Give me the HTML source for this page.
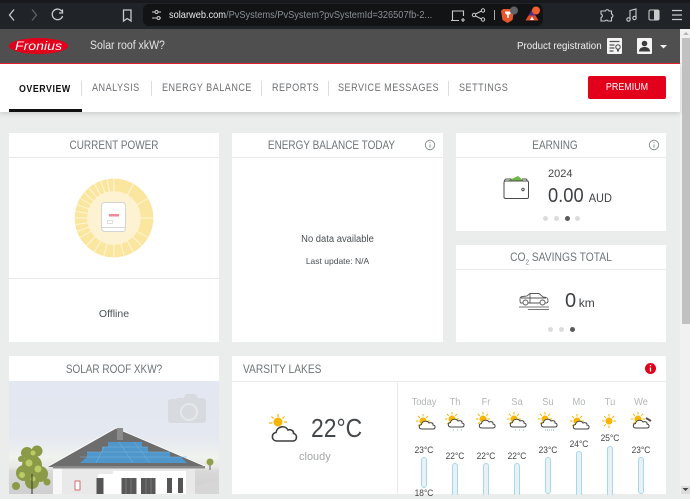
<!DOCTYPE html>
<html><head><meta charset="utf-8"><style>
html,body{margin:0;padding:0;width:690px;height:494px;overflow:hidden;background:#ebedec;font-family:"Liberation Sans",sans-serif}
.a{position:absolute;white-space:nowrap}
.card{position:absolute;background:#fff}
.h{position:absolute;left:0;right:0;text-align:center;font-size:12px;color:#6f7478;white-space:nowrap;transform:scaleX(.83)}
.line{position:absolute;background:#e9e9e9}
.nav{position:absolute;top:82px;font-size:11px;letter-spacing:.6px;color:#6e7073;white-space:nowrap;transform:scaleX(.825);transform-origin:0 0}
.sep{position:absolute;top:81px;width:1px;height:15px;background:#ddd}
.dot{position:absolute;width:5px;height:5px;border-radius:50%;background:#dcdcdc}
.day{position:absolute;top:397px;width:30px;text-align:center;font-size:10px;color:#b3b5b7;transform:scaleX(.93)}
.t{position:absolute;width:30px;text-align:center;font-size:9.5px;color:#444;transform:scaleX(.88)}
.bar{position:absolute;width:4px;background:#e9f1f5;border:1px solid #a4d8ec;border-radius:3px}
</style></head><body>
<div class="a" style="left:0;top:0;width:690px;height:29px;background:#202327"></div>
<div class="a" style="left:0;top:0;width:690px;height:3px;background:#17191c"></div>
<svg class="a" style="left:0;top:0" width="690" height="30" fill="none" stroke="#c8cacc" stroke-width="1.3">
<path d="M14 9.500l-4.500 5.500 4.500 5.500"/><path d="M32 9.500l4.500 5.500-4.500 5.500" stroke="#5f6367"/>
<path d="M62 11.500a5.300 5.300 0 1 0 .6 4.500M62.500 9.500v3.500h-3.500"/>
<path d="M123.500 10h7.500v11l-3.750-2.500-3.750 2.500z"/>
<rect x="143" y="4" width="400" height="22" rx="6" fill="#111315" stroke="none"/>
<path d="M152 12h3M158 12h3M152 18h5M160 18h1" stroke-width="1"/><circle cx="156.500" cy="12" r="1.500" stroke-width="1"/><circle cx="158.500" cy="18" r="1.500" stroke-width="1"/>
<path d="M452.500 20v-9h11v5M451 20.500h8M461 20h4M463 18v4" stroke-width="1.100"/>
<circle cx="474" cy="15" r="1.700" stroke-width="1"/><circle cx="483" cy="10.500" r="1.700" stroke-width="1"/><circle cx="483" cy="19.500" r="1.700" stroke-width="1"/><path d="M475.500 14l6-3M475.500 16l6 3" stroke-width="1"/>
<path d="M494.500 10v10" stroke="#aaa" stroke-width="1"/>
<path d="M503 9h9l2 2-1.500 9-5 3-5-3-1.500-9z" fill="#e8562a" stroke="none"/><path d="M505 11.500h5l.8 2-2 1.500v3h-1.600v-3l-2-1.500z" fill="#fff" stroke="none"/>
<circle cx="514" cy="10.500" r="4" fill="#5f6367" stroke="none"/>
<path d="M525.500 20.500l6.500-11 6.500 11z" fill="#5b2a86" stroke="none"/><path d="M525.500 20.500l3-5 7 0 3 5z" fill="#e04a2a" stroke="none"/><path d="M530 20l2-3.500 2 3.500z" fill="#fff" stroke="none"/>
<circle cx="536" cy="10.500" r="4" fill="#f0612e" stroke="none"/>
<path d="M603 11h2.500a1.800 1.800 0 0 1 3.500 0h2.500v3a1.800 1.800 0 0 1 0 3.500v3.500h-3.500a1.800 1.800 0 0 0-3 0H601v-3.500a1.800 1.800 0 0 0 0-3.500V11z" stroke-width="1.100"/>
<path d="M630 19V10.500l6-1.500v8.500" stroke-width="1.100"/><circle cx="628.500" cy="19.500" r="1.700" stroke-width="1.100"/><circle cx="634.500" cy="18" r="1.700" stroke-width="1.100"/>
<rect x="649" y="10" width="10" height="10" rx="1.500" stroke-width="1.100"/><rect x="654" y="10" width="5" height="10" fill="#c8cacc" stroke="none"/>
<path d="M672 10.500h10M672 15h10M672 19.500h10" stroke-width="1.200"/>
</svg>
<div class="a" style="left:169px;top:9px;font-size:10.500px;color:#e8eaec;transform:scaleX(.88);transform-origin:0 0">solarweb.com<span style="color:#8b9096">/PvSystems/PvSystem?pvSystemId=326507fb-2...</span></div>

<div class="a" style="left:0;top:29px;width:680px;height:34px;background:#4f4f4f"></div>
<div class="a" style="left:0;top:63px;width:680px;height:1px;background:#e2202c"></div>
<svg class="a" style="left:9px;top:38px" width="60" height="17"><ellipse cx="29.500" cy="8" rx="29.500" ry="8" fill="#e2001a"/><text x="6" y="12" font-family="Liberation Sans" font-style="italic" font-size="12" fill="#fff" textLength="47" lengthAdjust="spacingAndGlyphs">Fronius</text></svg>
<div class="a" style="left:90px;top:40px;font-size:11.500px;color:#e4e4e4;transform:scaleX(.915);transform-origin:0 0">Solar roof xkW?</div>
<div class="a" style="left:517px;top:40px;font-size:10.500px;color:#f0f0f0;transform:scaleX(.93);transform-origin:0 0">Product registration</div>
<svg class="a" style="left:607px;top:38px" width="70" height="18">
<rect x="0" y="0" width="15" height="16" rx="1" fill="#f4f4f4"/><path d="M2.500 3.500h10M2.500 7h5M2.500 10h5M2.500 13h4" stroke="#555" stroke-width="1.200"/><circle cx="11" cy="9" r="2.200" fill="none" stroke="#555" stroke-width="1.100"/><path d="M10 11v3l1-1 1 1v-3" fill="#555"/>
<rect x="30" y="0" width="15" height="16" rx="1" fill="#f4f4f4"/><circle cx="37.500" cy="5.500" r="2.800" fill="#3c3c3c"/><path d="M32 13.500c0-3.500 3-4.500 5.500-4.500s5.500 1 5.500 4.500z" fill="#3c3c3c"/>
<path d="M53 7h7l-3.500 3.500z" fill="#f0f0f0"/></svg>

<div class="a" style="left:680px;top:29px;width:10px;height:465px;background:#f1f1f1"></div>
<div class="a" style="left:682px;top:38px;width:8px;height:286px;background:#c1c1c1"></div>
<svg class="a" style="left:680px;top:29px" width="10" height="9"><path d="M3 6h6L6 3z" fill="#b5b5b5"/></svg>
<div class="a" style="left:681px;top:486px;width:9px;height:8px;background:#dcdcdc"></div>
<svg class="a" style="left:681px;top:486px" width="9" height="8"><path d="M1.500 2h6L4.500 5z" fill="#444"/></svg>

<div class="a" style="left:0;top:64px;width:680px;height:48px;background:#fff;box-shadow:0 2px 4px rgba(0,0,0,.12)"></div>
<div class="nav" style="left:19px;color:#111;font-weight:700;font-size:10.5px;letter-spacing:.65px;top:83px;transform:scaleX(.84)">OVERVIEW</div>
<div class="a" style="left:9px;top:109px;width:73px;height:3px;background:#111"></div>
<div class="sep" style="left:81px"></div>
<div class="nav" style="left:92px">ANALYSIS</div>
<div class="sep" style="left:151px"></div>
<div class="nav" style="left:162px">ENERGY BALANCE</div>
<div class="sep" style="left:261px"></div>
<div class="nav" style="left:272px">REPORTS</div>
<div class="sep" style="left:328px"></div>
<div class="nav" style="left:338px">SERVICE MESSAGES</div>
<div class="sep" style="left:448px"></div>
<div class="nav" style="left:459px">SETTINGS</div>
<div class="a" style="left:588px;top:76px;width:78px;height:23px;background:#e2001a;border-radius:2px"></div>
<div class="a" style="left:588px;top:76px;width:78px;height:23px;color:#fff;font-size:10.500px;line-height:23px;text-align:center;transform:scaleX(.85)">PREMIUM</div>

<!-- Current power -->
<div class="card" style="left:9px;top:133px;width:210px;height:209px"></div>
<div class="h" style="left:9px;width:210px;right:auto;top:138px">CURRENT POWER</div>
<div class="line" style="left:9px;top:157px;width:210px;height:1px"></div>
<div class="line" style="left:9px;top:278px;width:210px;height:1px"></div>
<svg class="a" style="left:70px;top:174px" width="90" height="90">
<circle cx="44" cy="44" r="39.500" fill="#fdf3d2"/>
<circle cx="44" cy="44" r="33" fill="none" stroke="#fbe6a0" stroke-width="12.500"/>
<g stroke="#fff6d8" stroke-width="1">
<line x1="44" y1="5" x2="44" y2="18"/>
<line x1="44" y1="5" x2="44" y2="18" transform="rotate(30 44 44)"/>
<line x1="44" y1="5" x2="44" y2="18" transform="rotate(60 44 44)"/>
<line x1="44" y1="5" x2="44" y2="18" transform="rotate(90 44 44)"/>
<line x1="44" y1="5" x2="44" y2="18" transform="rotate(120 44 44)"/>
<line x1="44" y1="5" x2="44" y2="18" transform="rotate(135 44 44)"/>
<line x1="44" y1="5" x2="44" y2="18" transform="rotate(150 44 44)"/>
<line x1="44" y1="5" x2="44" y2="18" transform="rotate(165 44 44)"/>
<line x1="44" y1="5" x2="44" y2="18" transform="rotate(180 44 44)"/>
<line x1="44" y1="5" x2="44" y2="18" transform="rotate(195 44 44)"/>
<line x1="44" y1="5" x2="44" y2="18" transform="rotate(210 44 44)"/>
<line x1="44" y1="5" x2="44" y2="18" transform="rotate(225 44 44)"/>
<line x1="44" y1="5" x2="44" y2="18" transform="rotate(240 44 44)"/>
<line x1="44" y1="5" x2="44" y2="18" transform="rotate(250 44 44)"/>
<line x1="44" y1="5" x2="44" y2="18" transform="rotate(260 44 44)"/>
<line x1="44" y1="5" x2="44" y2="18" transform="rotate(270 44 44)"/>
<line x1="44" y1="5" x2="44" y2="18" transform="rotate(280 44 44)"/>
<line x1="44" y1="5" x2="44" y2="18" transform="rotate(290 44 44)"/>
<line x1="44" y1="5" x2="44" y2="18" transform="rotate(300 44 44)"/>
<line x1="44" y1="5" x2="44" y2="18" transform="rotate(310 44 44)"/>
<line x1="44" y1="5" x2="44" y2="18" transform="rotate(320 44 44)"/>
<line x1="44" y1="5" x2="44" y2="18" transform="rotate(330 44 44)"/>
<line x1="44" y1="5" x2="44" y2="18" transform="rotate(340 44 44)"/>
<line x1="44" y1="5" x2="44" y2="18" transform="rotate(350 44 44)"/>
</g>
<rect x="31.500" y="28.500" width="24" height="29" rx="3" fill="#fff" stroke="#d4d4d4"/>
<path d="M32 53.500h23" stroke="#d8d8d8"/>
<rect x="39" y="40" width="10" height="2.500" fill="#f28a98"/>
<rect x="37.500" y="46.500" width="5" height="3" fill="#fff" stroke="#d8d8d8" stroke-width=".8"/>
</svg>
<div class="a" style="left:9px;width:210px;top:308px;text-align:center;font-size:10.500px;color:#4b5157">Offline</div>

<!-- Energy balance -->
<div class="card" style="left:232px;top:133px;width:211px;height:209px"></div>
<div class="h" style="left:226px;width:211px;right:auto;top:138px">ENERGY BALANCE TODAY</div>
<div class="line" style="left:232px;top:157px;width:211px;height:1px"></div>
<svg class="a" style="left:424px;top:139px" width="12" height="12"><circle cx="6" cy="6" r="4.700" fill="none" stroke="#8a8f92"/><path d="M6 5.500v3.200M6 3.300v1" stroke="#8a8f92"/></svg>
<div class="a" style="left:232px;width:211px;top:234px;text-align:center;font-size:10px;color:#4b4f52;transform:scaleX(.94)">No data available</div>
<div class="a" style="left:232px;width:211px;top:256px;text-align:center;font-size:8.500px;color:#4b4f52">Last update: N/A</div>

<!-- Earning -->
<div class="card" style="left:456px;top:133px;width:210px;height:98px"></div>
<div class="h" style="left:450px;width:210px;right:auto;top:138px">EARNING</div>
<div class="line" style="left:456px;top:157px;width:210px;height:1px"></div>
<svg class="a" style="left:648px;top:139px" width="12" height="12"><circle cx="6" cy="6" r="4.700" fill="none" stroke="#8a8f92"/><path d="M6 5.500v3.200M6 3.300v1" stroke="#8a8f92"/></svg>
<svg class="a" style="left:502px;top:174px" width="28" height="26" fill="none" stroke="#4a4a4a">
<path d="M3 8l13-6 6 5" fill="#6fb744" stroke="none"/>
<path d="M2.500 7.500c0-2 .5-2.500 2-2.500h5M20 5h4c1 0 1 1 1 2.500"/>
<rect x="2" y="7" width="24.500" height="17.500" rx="1.500" fill="#fff"/>
<circle cx="21" cy="15.500" r="1.200"/></svg>
<div class="a" style="left:548px;top:168px;font-size:11px;color:#444">2024</div>
<div class="a" style="left:548px;top:185px;font-size:20px;color:#3e4144;transform:scaleX(.915);transform-origin:0 0">0.00 <span style="font-size:12px">AUD</span></div>
<div class="dot" style="left:543px;top:216px"></div><div class="dot" style="left:554px;top:216px"></div><div class="dot" style="left:565px;top:216px;background:#5a5a5a"></div><div class="dot" style="left:575px;top:216px"></div>

<!-- CO2 -->
<div class="card" style="left:456px;top:245px;width:210px;height:97px"></div>
<div class="h" style="left:456px;width:210px;right:auto;top:250px;transform:scaleX(.86)">CO<sub style="font-size:7px;line-height:0">2</sub> SAVINGS TOTAL</div>
<div class="line" style="left:456px;top:269px;width:210px;height:1px"></div>
<svg class="a" style="left:518px;top:289px" width="32" height="22" fill="none" stroke="#555" stroke-width=".9">
<path d="M2 10c0-1.500 1-2.500 3-2.500l4-.5 3-2.500h9l4 3.500 3 .5c2 .5 2 2 2 3.500 0 1.500-1 2-2 2H3c-1 0-1-2-1-4z"/>
<path d="M12 5v9M3 9h25"/><circle cx="7.500" cy="13.500" r="2.500" fill="#fff"/><circle cx="24.500" cy="13.500" r="2.500" fill="#fff"/>
<path d="M1 18h30M10 20.500h21" stroke="#777"/></svg>
<div class="a" style="left:565px;top:290px;font-size:20px;color:#3e4144">0 <span style="font-size:12px;margin-left:-3px">km</span></div>
<div class="dot" style="left:548px;top:327px"></div><div class="dot" style="left:559px;top:327px"></div><div class="dot" style="left:570px;top:327px;background:#5a5a5a"></div>

<!-- Solar roof -->
<div class="card" style="left:9px;top:356px;width:210px;height:138px"></div>
<div class="h" style="left:9px;width:210px;right:auto;top:362px">SOLAR ROOF XKW?</div>
<svg class="a" style="left:9px;top:381px" width="210" height="113">
<defs><linearGradient id="s" x1="0" y1="0" x2="0" y2="1"><stop offset="0" stop-color="#e2e7f1"/><stop offset=".48" stop-color="#e4e8f0"/><stop offset=".68" stop-color="#f0f2ee"/><stop offset=".76" stop-color="#e8e8e6"/><stop offset=".8" stop-color="#d8d8d8"/><stop offset="1" stop-color="#cfcfcf"/></linearGradient></defs>
<rect width="210" height="113" fill="url(#s)"/>
<path d="M159 21a3 3 0 0 1 3-3h5l2-1h6l2-4h10l2 4h4a4 4 0 0 1 4 4v18a3 3 0 0 1-3 3h-32a3 3 0 0 1-3-3z" fill="#d7dade"/><circle cx="180" cy="31" r="8" fill="none" stroke="#e6e8ec" stroke-width="2"/>
<path d="M108 47h6v12h-6z" fill="#8b8b8b"/>
<path d="M38 86L107 47l91 39z" fill="#6d6d6d"/>
<path d="M38 86L107 47l91 39" fill="none" stroke="#fff" stroke-width=".8"/>
<path d="M108 47h6v12h-6z" fill="#8b8b8b"/>
<path d="M99 61h34v5h6v5h22v5h11l6 6H71l7-6v-5h15v-5h6z" fill="#4f96cb"/>
<path d="M71 76h107M78 71h83M93 66h46M110 61l14 21M125 61l16 21M95 66l-8 16" stroke="#7ab5dc" stroke-width=".5" fill="none"/>
<rect x="44" y="85" width="152" height="2.500" fill="#8a8a8a"/>
<rect x="44" y="87.500" width="142" height="25.500" fill="#e9e9e9"/>
<rect x="44" y="87.500" width="9" height="25.500" fill="#f7f7f7"/>
<rect x="89" y="93" width="15" height="20" fill="#fff"/><rect x="104" y="90" width="73" height="23" fill="#fff"/>
<rect x="87.500" y="97" width="7" height="16" fill="#555"/>
<rect x="112.500" y="97" width="15" height="16" fill="#585858"/><rect x="132" y="97" width="14.500" height="16" fill="#585858"/><path d="M117 97v16M122 97v16M137 97v16M142 97v16" stroke="#999" stroke-width=".5"/>
<rect x="158" y="97" width="5" height="15" fill="#555"/><rect x="169" y="97" width="5" height="15" fill="#555"/>
<rect x="66" y="100" width="5" height="9" fill="#fff" stroke="#c33" stroke-width=".7"/>
<path d="M186 105l24-6v14h-24z" fill="#d6d6d6"/>
<g fill="#8a9a46"><circle cx="23" cy="84" r="10"/><circle cx="18" cy="72" r="6"/><circle cx="28" cy="70" r="5.500"/><circle cx="15" cy="92" r="8"/><circle cx="31" cy="93" r="8"/><circle cx="23" cy="101" r="7"/><circle cx="7" cy="105" r="4"/><circle cx="38" cy="101" r="3.500"/><circle cx="12" cy="78" r="3"/></g>
<g fill="#bccb68"><circle cx="20" cy="82" r="3.500"/><circle cx="29" cy="88" r="3.500"/><circle cx="24" cy="72" r="2.500"/><circle cx="13" cy="94" r="3"/><circle cx="24" cy="98" r="2.500"/></g>
<path d="M23 93v20" stroke="#4a4a3a" stroke-width="1.200"/>
<circle cx="201" cy="81" r="3.500" fill="#8f9f4c"/><path d="M201 84v5" stroke="#666"/>
</svg>

<!-- Weather -->
<div class="card" style="left:232px;top:356px;width:434px;height:138px"></div>
<div class="a" style="left:243px;top:362px;font-size:12px;color:#6f7478;transform:scaleX(.85);transform-origin:0 0">VARSITY LAKES</div>
<div class="line" style="left:232px;top:381px;width:434px;height:1px"></div>
<div class="line" style="left:397px;top:381px;width:1px;height:113px"></div>
<svg class="a" style="left:644px;top:362px" width="13" height="13"><circle cx="6.500" cy="6.500" r="5.500" fill="#e2001a"/><path d="M6.500 5.500v4M6.500 3v1.300" stroke="#fff" stroke-width="1.300"/></svg>
<svg class="a" style="left:267px;top:411px" width="32" height="32" fill="none">
<circle cx="11" cy="11" r="4.500" fill="#f8b500"/>
<path d="M11 3v3M4.500 5.500l2 2M2 12h3.500M17.500 5.500l-2 2M20 11h-3" stroke="#f8b500" stroke-width="1.200"/>
<path d="M10 30c-6 0-6-8-1-8.500 1-6 9-8 12-2.500 3-1 6 1 5.500 3.500 4 .5 4 7.500-.5 7.500z" fill="#fff" stroke="#3d3d3d" stroke-width="1.600"/></svg>
<div class="a" style="left:311px;top:413px;font-size:26px;color:#45484b;transform:scaleX(.88);transform-origin:0 0">22°C</div>
<div class="a" style="left:299px;top:451px;font-size:11px;color:#a4a6a8">cloudy</div>

<div class="day" style="left:409px">Today</div><div class="day" style="left:440px">Th</div><div class="day" style="left:471px">Fr</div><div class="day" style="left:502px">Sa</div><div class="day" style="left:533px">Su</div><div class="day" style="left:564px">Mo</div><div class="day" style="left:595px">Tu</div><div class="day" style="left:626px">We</div>

<svg class="a" style="left:410px;top:412px" width="260" height="24" fill="none">
<defs>
<g id="sun"><circle cx="0" cy="0" r="3.500" fill="#f8b500"/><path d="M0-7v2.500M-5-5l1.800 1.800M-7 0h2.500M5-5l-1.800 1.800M7 0h-2.500M0 7v-2.500M-5 5l1.800-1.800" stroke="#f8b500"/></g>
<path id="cl" d="M-6 5c-3.500 0-3.500-4-.5-4.500C-6-3-1-4 1-1c2-1 4.500 0 4 2 3 .5 2.500 4 0 4z" fill="#fff" stroke="#444"/>
</defs>
<use href="#sun" x="13" y="9"/><use href="#cl" x="18" y="12"/>
<use href="#sun" x="42" y="7"/><use href="#cl" x="47" y="10"/><path d="M43 18h1M47 18h1M51 18h1" stroke="#7fb8dc"/>
<use href="#sun" x="73" y="7"/><use href="#cl" x="78" y="11"/>
<use href="#sun" x="104" y="7"/><use href="#cl" x="109" y="10"/><path d="M105 18h1M109 18h1M113 18h1" stroke="#7fb8dc"/>
<use href="#sun" x="135" y="7"/><use href="#cl" x="140" y="10"/><path d="M135 18h9" stroke="#7fb8dc" stroke-dasharray="1 1"/>
<use href="#sun" x="167" y="9"/><use href="#cl" x="172" y="12"/>
<use href="#sun" x="199" y="9"/>
<use href="#sun" x="228" y="7"/><use href="#cl" x="232" y="11"/><path d="M236 6l5 3" stroke="#555" stroke-width="2"/>
</svg>

<div class="t" style="left:409px;top:445px">23°C</div><div class="t" style="left:409px;top:488px">18°C</div>
<div class="t" style="left:440px;top:451px">22°C</div><div class="t" style="left:471px;top:451px">22°C</div><div class="t" style="left:502px;top:451px">22°C</div><div class="t" style="left:533px;top:445px">23°C</div><div class="t" style="left:564px;top:439px">24°C</div><div class="t" style="left:595px;top:433px">25°C</div><div class="t" style="left:626px;top:445px">23°C</div>
<div class="bar" style="left:421px;top:457px;height:29px"></div>
<div class="bar" style="left:452px;top:463px;height:31px;border-bottom:0;border-radius:3px 3px 0 0"></div>
<div class="bar" style="left:483px;top:463px;height:31px;border-bottom:0;border-radius:3px 3px 0 0"></div>
<div class="bar" style="left:514px;top:463px;height:31px;border-bottom:0;border-radius:3px 3px 0 0"></div>
<div class="bar" style="left:545px;top:457px;height:35px"></div>
<div class="bar" style="left:576px;top:451px;height:43px;border-bottom:0;border-radius:3px 3px 0 0"></div>
<div class="bar" style="left:607px;top:446px;height:48px;border-bottom:0;border-radius:3px 3px 0 0"></div>
<div class="bar" style="left:638px;top:457px;height:35px"></div>
</body></html>
